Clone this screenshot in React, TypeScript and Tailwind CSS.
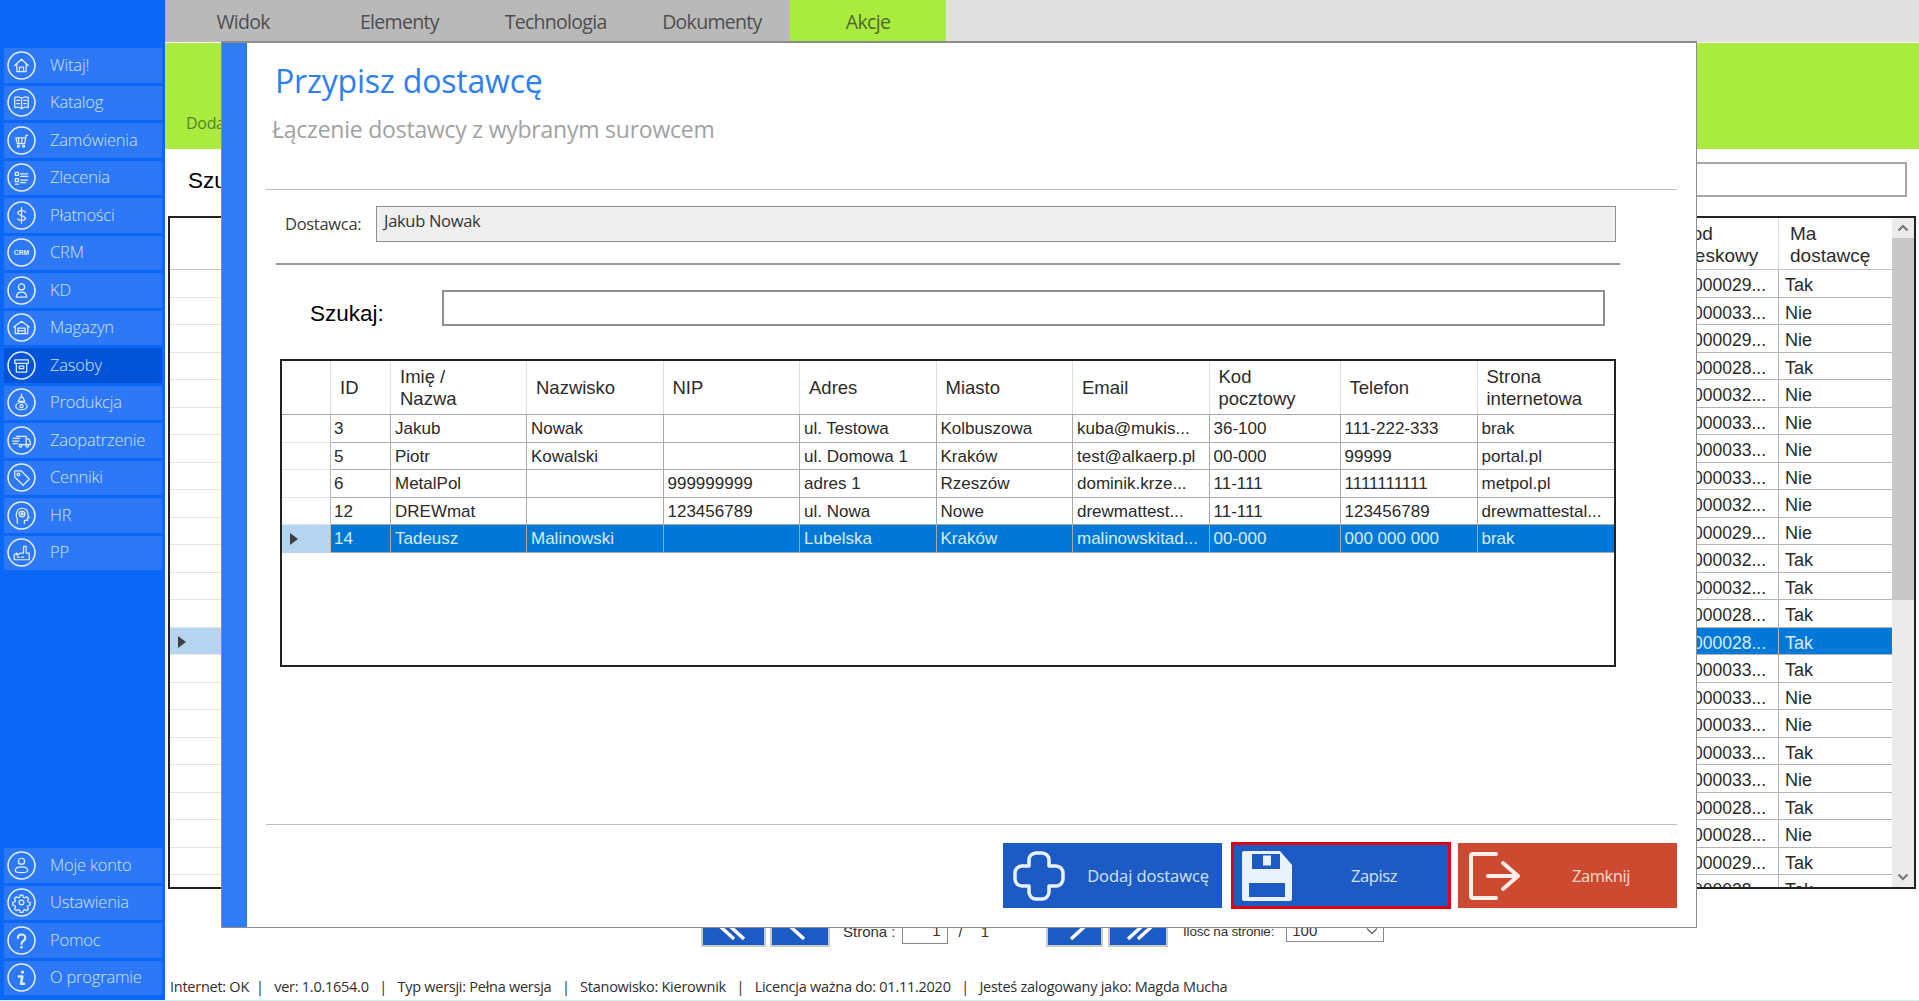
import React from "react";

const seg = "font-['Open_Sans',sans-serif]";
const ari = "font-['Liberation_Sans',sans-serif]";

const icons: Record<string, React.ReactNode> = {
  home: <path d="M7.5 14 14 8l6.5 6M9.5 12.5V20h9v-7.5M12 20v-4.5h4V20" />,
  book: <path d="M14 10c-2-1.500-5-1.500-6.500-1v10c1.500-.5 4.500-.5 6.500 1 2-1.500 5-1.500 6.500-1V9c-1.500-.5-4.500-.5-6.500 1zm0 0v10M9.500 12h2.500M9.500 15h2.500M16 12h2.500M16 15h2.500" />,
  cart: (
    <>
      <path d="M20 9h-1.500L17 17h-7L8.500 11.500h9.300M11 11.500l.5 5.500M14.500 11.500 14.200 17" />
      <circle cx="11" cy="19.500" r="1" />
      <circle cx="16" cy="19.500" r="1" />
    </>
  ),
  list: <path d="M8 9h3v3H8zM8 15h3v3H8zM13 10.500h7M13 13h7M13 16.500h7M13 19h5M8 20.500h3" />,
  dollar: <path d="M17.800 10.800C16.800 8.800 10.800 8.500 10.500 11.500 10.200 14.200 18 14 17.800 16.900 17.400 19.600 11.200 19.200 10.200 17.200M14 6.500v15" />,
  crm: (
    <text x="14" y="16" textAnchor="middle" fontSize="6.500" fontWeight="700" fill="#e4eeff" stroke="none" fontFamily="Liberation Sans, sans-serif">
      CRM
    </text>
  ),
  user: (
    <>
      <circle cx="14" cy="10.500" r="3" />
      <path d="M9 20.500c0-4 2-5 5-5s5 1 5 5z" />
    </>
  ),
  store: <path d="M6.500 13.500 14 8l7.500 5.500M8 12.500V20h12v-7.500M10.500 20v-5.500h7V20M10.500 17.200h7" />,
  box: <path d="M7.500 8.500h13v3.500h-13zM9 12v8.500h10V12M11.800 14.500h4.400v2.500h-4.400z" />,
  lamp: (
    <>
      <path d="M14 6v3M12.800 9h2.400l2 4h-6.400z" />
      <ellipse cx="14" cy="17.500" rx="5.500" ry="3.500" />
      <circle cx="14" cy="17.500" r="1.500" />
    </>
  ),
  truck: (
    <>
      <path d="M9 10h9.500v8H12M18.500 12.500H21l1.500 3V18h-2M6 12h6M5.500 14.500h6M6 17h4" />
      <circle cx="13" cy="19" r="1.300" />
      <circle cx="19.500" cy="19" r="1.300" />
    </>
  ),
  tag: (
    <>
      <path d="M7.500 7.500h6l8 8-6 6-8-8z" />
      <circle cx="11" cy="11" r="1.300" />
    </>
  ),
  head: (
    <>
      <path d="M10 21.500V17.500C7.500 13 9.800 7 14.500 7c4 0 6 3 5.500 6l1.300 3h-1.500v2.800h-3v2.700" />
      <circle cx="14.500" cy="12.500" r="2.800" />
      <circle cx="14.500" cy="12.500" r="1" />
    </>
  ),
  factory: <path d="M7 21h14.500v-6.500h-3V8h-2.500v6.500h-3L9.500 16.500v-2L7 16zM10 18.500h2M14 18.500h2" />,
  account: (
    <>
      <circle cx="14" cy="10" r="3" />
      <path d="M8 19c0-3 2.500-3.700 6-3.700s6 .7 6 3.700c0 1.500-2.500 1.800-6 1.800s-6-.3-6-1.800z" />
    </>
  ),
  gear: (
    <>
      <circle cx="14" cy="14" r="2.300" />
      <path d="M12.700 6.800h2.600l.4 2 1.600.7 1.700-1.100 1.800 1.800-1.100 1.700.7 1.600 2 .4v2.600l-2 .4-.7 1.600 1.100 1.700-1.800 1.800-1.700-1.100-1.600.7-.4 2h-2.600l-.4-2-1.600-.7-1.700 1.100-1.800-1.800 1.100-1.700-.7-1.600-2-.4v-2.600l2-.4.7-1.600-1.100-1.700 1.800-1.800 1.700 1.100 1.600-.7z" />
    </>
  ),
  help: (
    <>
      <path strokeWidth="2" d="M10.500 11.500c0-4.500 7.200-4.500 7.200 0 0 3-3.700 2.800-3.700 5.800" />
      <circle cx="14" cy="20.500" r="1.300" fill="#e4eeff" stroke="none" />
    </>
  ),
  info: (
    <>
      <circle cx="15" cy="8.800" r="1.600" fill="#e4eeff" stroke="none" />
      <path strokeWidth="2.300" d="M11.500 13h3.300L13.500 20h3" />
    </>
  ),
};

function Nav({ icon, label, active }: { icon: string; label: string; active?: boolean }) {
  return (
    <div className={`flex h-[34.5px] items-center pl-[3px] ${active ? "bg-[#0353d8]" : "bg-[#2d78f6]"}`}>
      <svg width="29" height="29" viewBox="0 0 28 28" fill="none" stroke="#e4eeff" strokeWidth="1.200" strokeLinejoin="round" strokeLinecap="round" className="shrink-0">
        <circle cx="14" cy="14" r="13" strokeWidth="1.500" />
        {icons[icon]}
      </svg>
      <span className={`ml-[14px] text-[16.5px] font-light tracking-[-0.2px] text-[#d3e3ff] ${seg}`}>{label}</span>
    </div>
  );
}

const top = [
  ["home", "Witaj!"],
  ["book", "Katalog"],
  ["cart", "Zamówienia"],
  ["list", "Zlecenia"],
  ["dollar", "Płatności"],
  ["crm", "CRM"],
  ["user", "KD"],
  ["store", "Magazyn"],
  ["box", "Zasoby"],
  ["lamp", "Produkcja"],
  ["truck", "Zaopatrzenie"],
  ["tag", "Cenniki"],
  ["head", "HR"],
  ["factory", "PP"],
];
const bottom = [
  ["account", "Moje konto"],
  ["gear", "Ustawienia"],
  ["help", "Pomoc"],
  ["info", "O programie"],
];

const bgRows: [string, string][] = [
  ["29", "Tak"], ["33", "Nie"], ["29", "Nie"], ["28", "Tak"], ["32", "Nie"], ["33", "Nie"], ["33", "Nie"], ["33", "Nie"],
  ["32", "Nie"], ["29", "Nie"], ["32", "Tak"], ["32", "Tak"], ["28", "Tak"], ["28", "Tak"], ["33", "Tak"], ["33", "Nie"],
  ["33", "Nie"], ["33", "Tak"], ["33", "Nie"], ["28", "Tak"], ["28", "Nie"], ["29", "Tak"], ["28", "Tak"], ["28", "Nie"],
];

const cols = "grid-cols-[49px_60px_136px_136.500px_136.500px_136.500px_136.500px_136.500px_131px_137px_1fr]";
const suppliers = [
  ["3", "Jakub", "Nowak", "", "ul. Testowa", "Kolbuszowa", "kuba@mukis...", "36-100", "111-222-333", "brak"],
  ["5", "Piotr", "Kowalski", "", "ul. Domowa 1", "Kraków", "test@alkaerp.pl", "00-000", "99999", "portal.pl"],
  ["6", "MetalPol", "", "999999999", "adres 1", "Rzeszów", "dominik.krze...", "11-111", "1111111111", "metpol.pl"],
  ["12", "DREWmat", "", "123456789", "ul. Nowa", "Nowe", "drewmattest...", "11-111", "123456789", "drewmattestal..."],
  ["14", "Tadeusz", "Malinowski", "", "Lubelska", "Kraków", "malinowskitad...", "00-000", "000 000 000", "brak"],
];
const heads = ["ID", "Imię /\nNazwa", "Nazwisko", "NIP", "Adres", "Miasto", "Email", "Kod\npocztowy", "Telefon", "Strona\ninternetowa"];

function Arrow() {
  return (
    <svg width="8" height="12" viewBox="0 0 8 12" className="ml-[8px] mt-[2px]">
      <path d="M0 0 8 6 0 12z" fill="#3f3f3f" />
    </svg>
  );
}

function PagerBtn({ d, className }: { d: string; className: string }) {
  return (
    <div className={`flex h-[52px] items-center justify-center border-2 border-[#c9c9c9] bg-[#1c5ac4] ${className}`}>
      <svg width="44" height="30" viewBox="0 0 44 30" fill="none" stroke="#fff" strokeWidth="3.500" className="mt-[14px]">
        <path d={d} />
      </svg>
    </div>
  );
}

export default function App() {
  return (
    <div className={`relative flex h-[1001px] w-[1919px] overflow-hidden bg-white ${seg}`}>
      <aside className="flex h-[1000px] w-[165px] shrink-0 flex-col justify-between bg-[#0b67f5] pl-[4px] pr-[3px] pb-[5px] pt-[48px]">
        <div className="flex flex-col gap-[3px]">
          {top.map(([i, l]) => (
            <Nav key={l} icon={i} label={l} active={l === "Zasoby"} />
          ))}
        </div>
        <div className="flex flex-col gap-[3px]">
          {bottom.map(([i, l]) => (
            <Nav key={l} icon={i} label={l} />
          ))}
        </div>
      </aside>

      <main className="flex h-[1000px] min-w-0 flex-1 flex-col">
        <div className="flex h-[42px] shrink-0 bg-[#e0e0e0]">
          {["Widok", "Elementy", "Technologia", "Dokumenty"].map((t) => (
            <div key={t} className="flex w-[156.250px] items-center justify-center bg-[#b9b9b9] pt-[2px] text-[19.500px] tracking-[-0.7px] text-[#4e4e4e]">
              {t}
            </div>
          ))}
          <div className="flex w-[156px] items-center justify-center bg-[#aaec3e] pt-[2px] text-[19.500px] tracking-[-0.7px] text-[#4a6a2a]">Akcje</div>
        </div>
        <div className="mt-[1px] flex h-[106px] shrink-0 items-end bg-[#aaec3e] pb-[14px] pl-[21px] text-[16px] tracking-[-0.3px] text-[#56802c]">Dodaj</div>
        <div className="flex h-[67px] shrink-0 items-start">
          <span className={`ml-[23px] mt-[17px] text-[22.500px] leading-[30px] text-black ${ari}`}>Szukaj:</span>
          <div className="mx-[12px] ml-[190px] mt-[13px] h-[35px] flex-1 border-2 border-[#a6a6a6]" />
        </div>

        <div className={`ml-[3px] mr-[3px] flex h-[673px] shrink-0 overflow-hidden border-2 border-[#222] ${ari}`}>
          <div className="min-w-0 flex-1 overflow-hidden">
            <div className="flex h-[52px] border-b border-[#c4c4c4]">
              <div className="flex-1" />
              <div className="w-[112px] border-r border-[#dedede] pl-[12px] pt-[5px] text-[19px] leading-[22px] text-[#2c2c2c]">
                Kod
                <br />
                kreskowy
              </div>
              <div className="w-[113px] pl-[11px] pt-[5px] text-[19px] leading-[22px] text-[#2c2c2c]">
                Ma
                <br />
                dostawcę
              </div>
            </div>
            {bgRows.map(([k, v], i) => {
              const sel = i === 13;
              return (
                <div key={i} className="flex h-[27.500px]">
                  <div className={`flex w-[51px] items-center border-b border-[#e6e6e6] ${sel ? "bg-[#b6d5f0]" : ""}`}>{sel && <Arrow />}</div>
                  <div className="flex-1 border-b border-[#e6e6e6]" />
                  <div className={`w-[112px] overflow-hidden border-b border-r border-[#b4b4b4] pr-[12px] text-right text-[17.500px] leading-[30px] ${sel ? "bg-[#0078d7] text-[#d8ecff]" : "text-[#2a2a2a]"}`}>
                    590000{k}...
                  </div>
                  <div className={`w-[113px] overflow-hidden border-b border-[#b4b4b4] pl-[6px] text-[18px] leading-[30px] ${sel ? "bg-[#0078d7] text-[#d8ecff]" : "text-[#2a2a2a]"}`}>
                    {v}
                  </div>
                </div>
              );
            })}
          </div>
          <div className="flex w-[22px] shrink-0 flex-col bg-[#ebebeb]">
            <div className="flex h-[20px] items-center justify-center">
              <svg width="12" height="8" viewBox="0 0 12 8" fill="none" stroke="#777" strokeWidth="2.200">
                <path d="M1.500 6.500 6 2l4.500 4.500" />
              </svg>
            </div>
            <div className="h-[362px] bg-[#c8c8c8]" />
            <div className="flex-1" />
            <div className="flex h-[20px] items-center justify-center">
              <svg width="12" height="8" viewBox="0 0 12 8" fill="none" stroke="#777" strokeWidth="2.200">
                <path d="M1.500 1.500 6 6l4.500-4.500" />
              </svg>
            </div>
          </div>
        </div>

        <div className={`mt-[6px] ml-[536px] flex h-[52px] shrink-0 items-start text-[15px] text-[#333] ${ari}`}>
          <PagerBtn className="w-[65px]" d="M22 4 10 15 22 26M32 4 20 15 32 26" />
          <PagerBtn className="ml-[4px] w-[60px]" d="M26 4 14 15 26 26" />
          <span className="ml-[13px] mt-[27px] leading-[20px]">Strona :</span>
          <div className="ml-[6px] mt-[25px] h-[24px] w-[46px] border border-[#8a8a8a] pr-[6px] text-right leading-[20px]">1</div>
          <span className="ml-[11px] mt-[27px] leading-[20px]">/</span>
          <span className="ml-[18px] mt-[27px] leading-[20px]">1</span>
          <PagerBtn className="ml-[57px] w-[57px]" d="M18 4 30 15 18 26" />
          <PagerBtn className="ml-[5px] w-[60px]" d="M12 4 24 15 12 26M22 4 34 15 22 26" />
          <span className="ml-[15px] mt-[27px] text-[13.500px] leading-[20px] tracking-[-0.2px]">Ilość na stronie:</span>
          <div className="ml-[12px] mt-[25px] flex h-[22px] w-[98px] items-center justify-between border border-[#8a8a8a] px-[5px]">
            <span>100</span>
            <svg width="12" height="8" viewBox="0 0 12 8" fill="none" stroke="#666" strokeWidth="1.300">
              <path d="M1 1.500 6 6.500l5-5" />
            </svg>
          </div>
        </div>

        <div className="mt-[28px] flex h-[24px] items-center whitespace-pre pl-[5px] text-[14.500px] tracking-[-0.26px] text-[#2e2e2e]">
          {"Internet: OK  |   ver: 1.0.1654.0   |   Typ wersji: Pełna wersja   |   Stanowisko: Kierownik   |   Licencja ważna do: 01.11.2020   |   Jesteś zalogowany jako: Magda Mucha"}
        </div>
      </main>

      <div className="absolute bottom-0 left-0 h-[1px] w-full bg-[#d4efee]" />

      <section className="absolute left-[221px] top-[41px] flex h-[887px] w-[1476px] border border-t-2 border-[#8c8c8c] bg-white">
        <div className="w-[25px] shrink-0 bg-[#2f7df6]" />
        <div className="flex min-w-0 flex-1 flex-col">
          <h1 className="ml-[28px] mt-[16px] h-[44px] text-[32px] leading-[44px] tracking-[-0.2px] text-[#2f80ef]">Przypisz dostawcę</h1>
          <p className="ml-[25px] mt-[11px] h-[30px] text-[23px] leading-[30px] tracking-[-0.23px] text-[#a2a2a2]">Łączenie dostawcy z wybranym surowcem</p>
          <div className="ml-[19px] mr-[19px] mt-[45px] h-px shrink-0 bg-[#bdbdbd]" />
          <div className="mt-[16px] flex h-[36px] shrink-0 items-center">
            <span className="ml-[38px] w-[91px] pt-[1px] text-[16.500px] tracking-[-0.3px] text-[#3a3a3a]">Dostawca:</span>
            <div className="h-[36px] w-[1240px] border border-[#8f8f8f] bg-[#efefef] pl-[7px] text-[16.500px] leading-[28px] tracking-[-0.3px] text-[#333]">Jakub Nowak</div>
          </div>
          <div className="ml-[29px] mt-[21px] h-[2px] w-[1344px] shrink-0 bg-[#9a9a9a]" />
          <div className="mt-[25px] flex h-[36px] shrink-0 items-center">
            <span className={`ml-[63px] w-[132px] pt-[12px] text-[22.500px] text-black ${ari}`}>Szukaj:</span>
            <div className="h-[36px] w-[1163px] border-2 border-[#8f8f8f]" />
          </div>

          <div className={`ml-[33px] mt-[33px] h-[308px] w-[1336px] shrink-0 overflow-hidden border-2 border-[#222] ${ari}`}>
            <div className={`grid h-[54px] border-b border-[#a8a8a8] ${cols}`}>
              <div className="border-r border-[#dedede]" />
              {heads.map((h) => (
                <div key={h} className="flex items-center whitespace-pre-line border-r border-[#dedede] pl-[9px] pt-[1px] text-[18.500px] leading-[22px] text-[#2c2c2c] last:border-r-0">
                  {h}
                </div>
              ))}
            </div>
            {suppliers.map((r, i) => {
              const sel = i === 4;
              return (
                <div key={r[0]} className={`grid h-[27.500px] ${cols}`}>
                  <div className={`flex items-center border-b border-r border-[#b8b8b8] ${sel ? "border-b-[#b6d5f0] bg-[#b6d5f0]" : "border-b-[#e6e6e6]"}`}>{sel && <Arrow />}</div>
                  {r.map((c, j) => (
                    <div
                      key={j}
                      className={`overflow-hidden whitespace-nowrap border-b border-r border-[#a8a8a8] text-[17px] leading-[27px] last:border-r-0 ${j === 0 ? "pl-[3px]" : "pl-[4px]"} ${sel ? "bg-[#0078d7] text-[#d8ecff]" : "text-[#2a2a2a]"}`}
                    >
                      {c}
                    </div>
                  ))}
                </div>
              );
            })}
          </div>

          <div className="ml-[19px] mr-[19px] mt-auto h-px shrink-0 bg-[#bdbdbd]" />
          <div className="mb-[18px] mr-[19px] mt-[17px] flex items-center justify-end">
            <div className="flex h-[65px] w-[219px] items-center bg-[#1c5ac4] pl-[10px] pr-[13px] pt-[1px] text-[16.500px] tracking-[-0.05px] text-[#d6e4ff]">
              <svg width="52" height="50" viewBox="0 0 52 50" fill="none" stroke="#eaf1ff" strokeWidth="3.500" strokeLinejoin="round" className="shrink-0">
                <path d="M16 15V9a7 7 0 0 1 7-7h6a7 7 0 0 1 7 7v6h7a7 7 0 0 1 7 7v6a7 7 0 0 1-7 7h-7v6a7 7 0 0 1-7 7h-6a7 7 0 0 1-7-7v-6H9a7 7 0 0 1-7-7v-6a7 7 0 0 1 7-7z" />
              </svg>
              <span className="flex-1 text-right">Dodaj dostawcę</span>
            </div>
            <div className="ml-[9px] flex h-[67px] w-[220px] items-center border-[3px] border-[#e00016] bg-[#1c5ac4] pl-[8px] pt-[1px] text-[16.500px] tracking-[-0.4px] text-[#d6e4ff]">
              <svg width="50" height="50" viewBox="0 0 50 50" className="shrink-0">
                <path d="M0 2a2 2 0 0 1 2-2h36l12 14v34a2 2 0 0 1-2 2H2a2 2 0 0 1-2-2z" fill="#eaf1ff" />
                <path d="M10 3h28v15H10zM7 32h36v14H7z" fill="#1c5ac4" />
                <path d="M21 4.500h8v10h-8z" fill="#eaf1ff" />
              </svg>
              <span className="flex-1 pl-[8px] text-center">Zapisz</span>
            </div>
            <div className="ml-[7px] flex h-[65px] w-[219px] items-center bg-[#cd4a30] pl-[11px] pt-[1px] text-[16.500px] tracking-[-0.4px] text-[#fbdcd4]">
              <svg width="52" height="50" viewBox="0 0 52 50" fill="none" stroke="#fdeee9" strokeWidth="4" strokeLinecap="round" strokeLinejoin="round" className="shrink-0">
                <path d="M27 3H4a2 2 0 0 0-2 2v40a2 2 0 0 0 2 2h23" />
                <path d="M19 25h30M34 12l15 13-15 13" />
              </svg>
              <span className="flex-1 pl-[4px] text-center">Zamknij</span>
            </div>
          </div>
        </div>
      </section>
    </div>
  );
}
